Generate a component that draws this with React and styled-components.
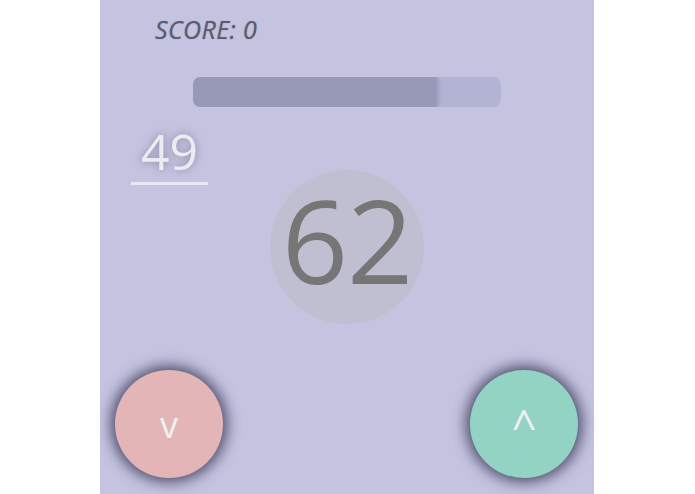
import React from "react";
import styled, { createGlobalStyle } from "styled-components";

const GlobalStyle = createGlobalStyle`
    html, body {
        margin: 0;
        padding: 0;
        background: #ffffff;
        font-family: "Open Sans", "DejaVu Sans", sans-serif;
    }
`;

const Page = styled.div`
    width: 694px;
    display: flex;
    justify-content: center;
`;

const Board = styled.div`
    width: 494px;
    height: 494px;
    background: #c4c4e1;
    display: flex;
    flex-direction: column;
    box-sizing: border-box;
`;

const Score = styled.div`
    padding: 12px 0 0 55px;
    height: 36px;
    font-size: 25px;
    font-style: italic;
    font-weight: 400;
    letter-spacing: 0.4px;
    color: #5c5c6c;
    text-shadow: 0 0 1px rgba(80, 80, 100, 0.6);
`;

const Track = styled.div`
    width: 308px;
    height: 30px;
    margin: 29px auto 0;
    border-radius: 7px;
    background: #b3b3d4;
    overflow: hidden;
`;

const Fill = styled.div`
    height: 100%;
    background: #9797b6;
    border-radius: 7px 0 0 7px;
    box-shadow: 2px 0 4px rgba(90, 90, 120, 0.35);
`;

const Middle = styled.div`
    display: grid;
    grid-template-columns: 1fr auto 1fr;
    align-items: start;
`;

const Target = styled.div`
    padding: 15px 0 0 31px;
    display: flex;
    flex-direction: column;
    align-items: center;
    width: 77px;
`;

const TargetValue = styled.div`
    font-size: 50px;
    line-height: 58px;
    color: #ececf0;
    text-shadow: 0 0 8px rgba(80, 80, 110, 0.55);
`;

const Underline = styled.div`
    width: 77px;
    height: 3px;
    margin-top: 2px;
    background: #e8e8f0;
`;

const Dial = styled.div`
    margin-top: 63px;
    width: 154px;
    height: 154px;
    border-radius: 50%;
    background: #bfbfd1;
    display: flex;
    align-items: center;
    justify-content: center;
    font-size: 116px;
    line-height: 1;
    color: #767676;
    letter-spacing: -1px;
    padding-bottom: 16px;
    box-sizing: border-box;
`;

const Controls = styled.div`
    margin-top: auto;
    padding: 0 16px 16px 15px;
    display: flex;
    justify-content: space-between;
`;

const RoundButton = styled.button`
    width: 108px;
    height: 108px;
    border-radius: 50%;
    border: none;
    padding: 0;
    background: ${(p) => p.color};
    box-shadow: 0 0 14px 4px rgba(55, 55, 85, 0.85);
    color: #f0f0f0;
    font-family: "Open Sans", sans-serif;
    font-size: 36px;
    display: flex;
    align-items: center;
    justify-content: center;
    cursor: pointer;
`;

const Glyph = styled.span`
    line-height: 1;
    margin-top: ${(p) => p.offset}px;
    font-size: ${(p) => p.size}px;
`;

export default function App() {
    const progress = 0.79;
    return (
        <Page>
            <GlobalStyle />
            <Board>
                <Score>SCORE: 0</Score>
                <Track>
                    <Fill style={{ width: `${progress * 100}%` }} />
                </Track>
                <Middle>
                    <Target>
                        <TargetValue>49</TargetValue>
                        <Underline />
                    </Target>
                    <Dial>62</Dial>
                    <div />
                </Middle>
                <Controls>
                    <RoundButton color="#e3b5b6">
                        <Glyph size={36} offset={2}>v</Glyph>
                    </RoundButton>
                    <RoundButton color="#93d3c4">
                        <Glyph size={44} offset={2}>^</Glyph>
                    </RoundButton>
                </Controls>
            </Board>
        </Page>
    );
}
